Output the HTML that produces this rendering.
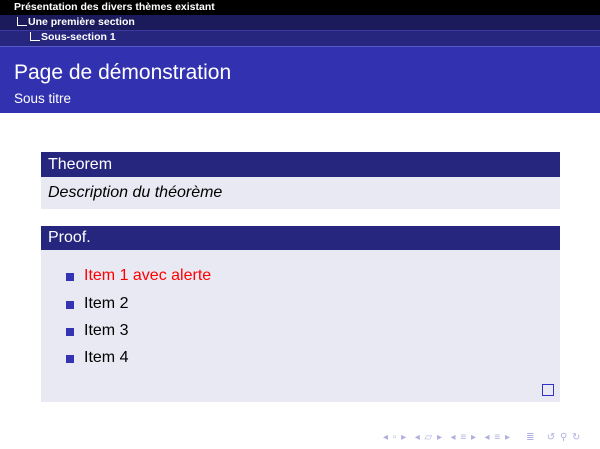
<!DOCTYPE html>
<html><head><meta charset="utf-8"><style>
*{margin:0;padding:0;box-sizing:border-box}
body{width:600px;height:449px;background:#fff;font-family:"Liberation Sans",sans-serif;position:relative;overflow:hidden}
.a{position:absolute;white-space:nowrap}
.nav{color:#fff;font-size:10.5px;font-weight:600;}
</style></head><body>
<div class="a" style="left:0;top:0;width:600px;height:15px;background:#000"></div>
<div class="a nav" style="left:14px;top:1px;">Présentation des divers thèmes existant</div>
<div class="a" style="left:0;top:15px;width:600px;height:15px;background:#1b1b5c"></div>
<div class="a" style="left:17px;top:17px;width:1px;height:9px;background:#fff"></div>
<div class="a" style="left:17px;top:25px;width:10px;height:1px;background:#fff"></div>
<div class="a nav" style="left:28px;top:16px;">Une première section</div>
<div class="a" style="left:0;top:30px;width:600px;height:1px;background:#3a3aa0"></div>
<div class="a" style="left:0;top:31px;width:600px;height:15px;background:#26267e"></div>
<div class="a" style="left:30px;top:32px;width:1px;height:9px;background:#fff"></div>
<div class="a" style="left:30px;top:40px;width:10px;height:1px;background:#fff"></div>
<div class="a nav" style="left:41px;top:31px;">Sous-section 1</div>
<div class="a" style="left:0;top:46px;width:600px;height:1px;background:#5a5ac8"></div>
<div class="a" style="left:0;top:47px;width:600px;height:66px;background:#3232b0"></div>
<div class="a" style="left:14px;top:61px;color:#fff;font-size:21px;">Page de démonstration</div>
<div class="a" style="left:14px;top:91px;color:#fff;font-size:13.5px;">Sous titre</div>

<div class="a" style="left:41px;top:152px;width:519px;height:25px;background:#26267e"></div>
<div class="a" style="left:48px;top:156px;color:#fff;font-size:16px;">Theorem</div>
<div class="a" style="left:41px;top:177px;width:519px;height:32px;background:#e9e9f3"></div>
<div class="a" style="left:48px;top:184px;color:#000;font-size:16px;font-style:italic;">Description du théorème</div>

<div class="a" style="left:41px;top:226px;width:519px;height:24px;background:#26267e"></div>
<div class="a" style="left:48px;top:229px;color:#fff;font-size:16px;">Proof.</div>
<div class="a" style="left:41px;top:250px;width:519px;height:152px;background:#e9e9f3"></div>
<div class="a" style="left:66px;top:273px;width:8px;height:8px;background:#3333b3"></div>
<div class="a" style="left:84px;top:267px;color:#f00;font-size:16px;">Item 1 avec alerte</div>
<div class="a" style="left:66px;top:301px;width:8px;height:8px;background:#3333b3"></div>
<div class="a" style="left:84px;top:295px;color:#000;font-size:16px;">Item 2</div>
<div class="a" style="left:66px;top:328px;width:8px;height:8px;background:#3333b3"></div>
<div class="a" style="left:84px;top:322px;color:#000;font-size:16px;">Item 3</div>
<div class="a" style="left:66px;top:355px;width:8px;height:8px;background:#3333b3"></div>
<div class="a" style="left:84px;top:349px;color:#000;font-size:16px;">Item 4</div>
<div class="a" style="left:542px;top:384px;width:12px;height:12px;border:1px solid #3333c8"></div>

<div class="a" style="left:383px;top:432px;color:#b0b0e0;font-size:10px;letter-spacing:1px">◂ ▫ ▸ &nbsp;◂ ▱ ▸ &nbsp;◂ ≡ ▸ &nbsp;◂ ≡ ▸ &nbsp;&nbsp;&nbsp;≣ &nbsp;&nbsp;↺ ⚲ ↻</div>
</body></html>
